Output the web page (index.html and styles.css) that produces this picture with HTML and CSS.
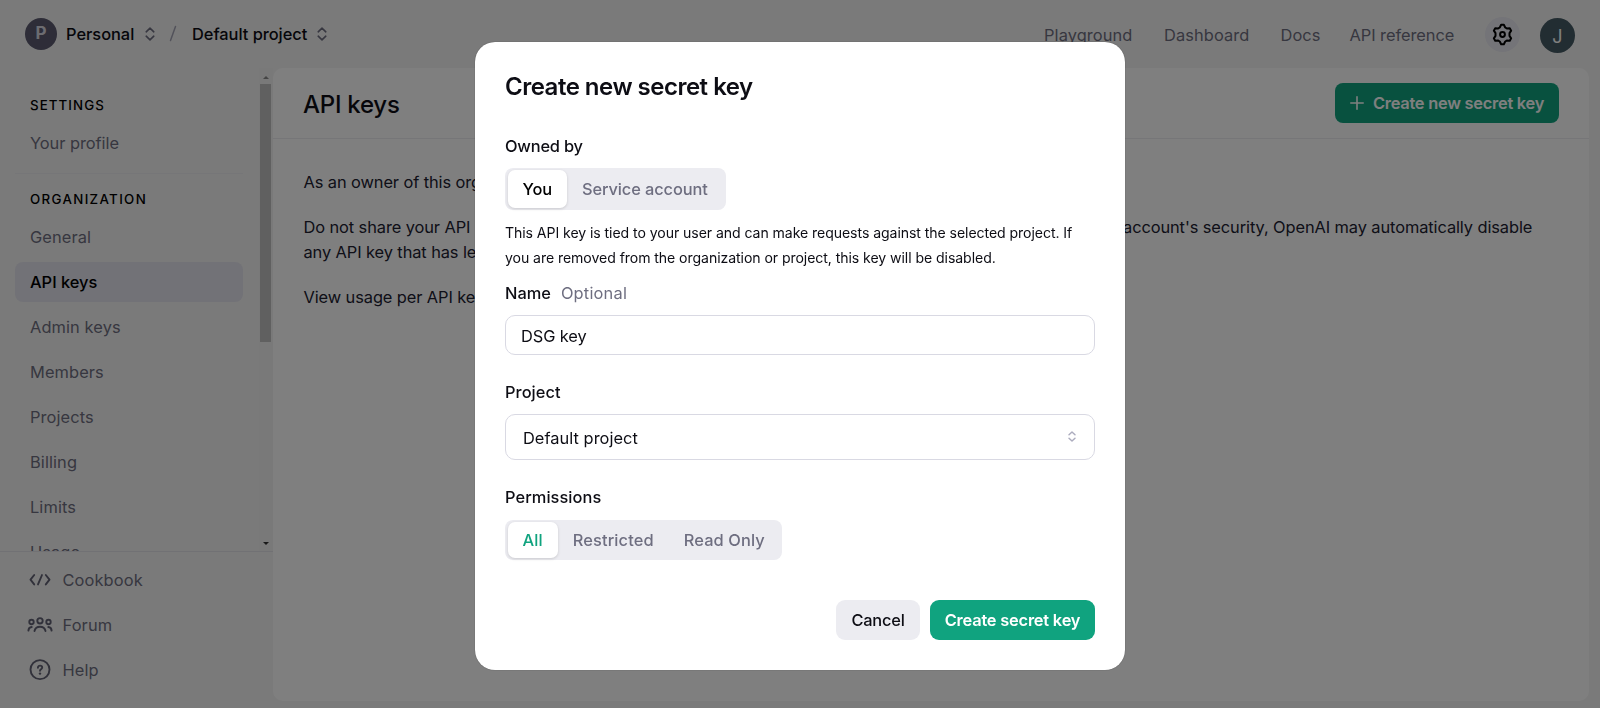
FILE: index.html
```html
<!DOCTYPE html>
<html lang="en">
<head>
<meta charset="utf-8">
<title>API keys</title>
<link rel="stylesheet" href="styles.css">
</head>
<body>
<div class="app">
  <header class="topbar">
    <div class="crumbs">
      <span class="org-avatar">P</span>
      <span class="crumb crumb-org">Personal</span>
      <svg class="updown" viewBox="0 0 10 14"><path d="M1.2 4.8 5 1.2l3.8 3.6M1.2 9.2 5 12.8l3.8-3.6"/></svg>
      <svg class="slash" viewBox="0 0 8 16"><path d="M6.500 1 1.500 15"/></svg>
      <span class="crumb crumb-project">Default project</span>
      <svg class="updown" viewBox="0 0 10 14"><path d="M1.2 4.8 5 1.2l3.8 3.6M1.2 9.2 5 12.8l3.8-3.6"/></svg>
    </div>
    <nav class="topnav">
      <a class="nav-play">Playground</a>
      <a class="nav-dash">Dashboard</a>
      <a class="nav-docs">Docs</a>
      <a class="nav-ref">API reference</a>
      <span class="gear"><svg viewBox="0 0 24 24"><path d="M10.700 2.700h2.600l1.300 2.600 1.500.9 2.900-.2 1.300 2.300-1.600 2.400v2.600l1.600 2.400-1.300 2.300-2.900-.2-1.500.9-1.300 2.600h-2.600l-1.300-2.600-1.500-.9-2.900.2-1.300-2.300 1.600-2.400v-2.600L3.700 8.300 5 6l2.900.2 1.500-.9z"/><circle cx="12" cy="12" r="2.300"/></svg></span>
      <span class="user-avatar">J</span>
    </nav>
  </header>
  <div class="columns">
    <aside class="sidebar">
      <div class="side-scroll">
        <div class="side-list">
          <h2 class="side-heading">SETTINGS</h2>
          <a class="side-item">Your profile</a>
          <hr class="side-rule">
          <h2 class="side-heading side-heading-org">ORGANIZATION</h2>
          <a class="side-item">General</a>
          <a class="side-item side-item-active">API keys</a>
          <a class="side-item">Admin keys</a>
          <a class="side-item">Members</a>
          <a class="side-item">Projects</a>
          <a class="side-item">Billing</a>
          <a class="side-item">Limits</a>
          <a class="side-item">Usage</a>
        </div>
        <div class="scrollbar">
          <span class="arrow-up"></span>
          <span class="thumb"></span>
          <span class="arrow-down"></span>
        </div>
      </div>
      <div class="side-footer">
        <a class="foot-item"><svg class="foot-icon" viewBox="0 0 26 26"><path d="M7.200 8 3.500 12.700l3.700 4.700M18.800 8l3.700 4.700-3.700 4.700M15 8l-4 9.400"/></svg>Cookbook</a>
        <a class="foot-item"><svg class="foot-icon" viewBox="0 0 26 26"><circle cx="13" cy="8.800" r="2.700"/><circle cx="4.500" cy="10" r="2.200"/><circle cx="21.500" cy="10" r="2.200"/><path d="M7.500 19c.7-3 2.900-4.200 5.500-4.200s4.800 1.200 5.500 4.200M1.400 18.600c.1-2 1-3.400 3.300-3.600M24.600 18.600c-.1-2-1-3.400-3.300-3.600"/></svg>Forum</a>
        <a class="foot-item"><svg class="foot-icon" viewBox="0 0 26 26"><circle cx="13" cy="12.600" r="9.500"/><path d="M10.900 10.700c0-2.900 4.300-2.700 4.300-.2 0 1.600-2.200 1.700-2.200 3.200"/><circle class="dot" cx="13" cy="16.600" r="1.200"/></svg>Help</a>
      </div>
    </aside>
    <main class="card">
      <div class="card-head">
        <h1 class="card-title">API keys</h1>
        <span class="create-new"><svg class="plus" viewBox="0 0 14 14"><path d="M7 .8v12.400M.8 7h12.400"/></svg>Create new secret key</span>
      </div>
      <div class="card-body">
        <p>As an owner of this organization, you can view and manage all API keys in this organization.</p>
        <p>Do not share your API key with others or expose it in the browser or other client-side code. To protect your account's security, OpenAI may automatically disable<br>any API key that has leaked publicly.</p>
        <p>View usage per API key on the Usage page.</p>
      </div>
    </main>
  </div>
</div>

<div class="overlay">
  <section class="modal">
    <h2 class="modal-title">Create new secret key</h2>
    <div class="label label-owner">Owned by</div>
    <div class="segments segments-owner">
      <span class="seg seg-on">You</span><span class="seg">Service account</span>
    </div>
    <p class="hint">This API key is tied to your user and can make requests against the selected project. If<br>you are removed from the organization or project, this key will be disabled.</p>
    <div class="label label-name">Name <span class="optional">Optional</span></div>
    <div class="field field-name">DSG key</div>
    <div class="label label-next">Project</div>
    <div class="field field-project">Default project<svg class="select-icon" viewBox="0 0 10 14"><path d="M1.200 4.800 5 1.200l3.800 3.600M1.200 9.200 5 12.800l3.800-3.600"/></svg></div>
    <div class="label label-next">Permissions</div>
    <div class="segments segments-perm">
      <span class="seg seg-on seg-green">All</span><span class="seg">Restricted</span><span class="seg">Read Only</span>
    </div>
    <div class="actions">
      <span class="btn btn-cancel">Cancel</span>
      <span class="btn btn-create">Create secret key</span>
    </div>
  </section>
</div>
</body>
</html>
```
FILE: styles.css
```css
* { box-sizing: border-box; }
body {
  margin: 0;
  height: 708px;
  overflow: hidden;
  background: #f5f5f5;
  color: #0d0d14;
  font: 400 16.4px/25px Inter, "Liberation Sans", sans-serif;
}
h1, h2, p { margin: 0; }
svg { display: block; flex: none; fill: none; stroke: currentColor; stroke-linecap: round; stroke-linejoin: round; }

.app { height: 708px; display: flex; flex-direction: column; }

/* Top bar */
.topbar { height: 68px; display: flex; justify-content: space-between; padding: 0 25px; }
.crumbs { display: flex; align-items: center; height: 67px; }
.org-avatar {
  width: 32px; height: 32px; border-radius: 50%;
  display: flex; align-items: center; justify-content: center;
  background: #5c5b70; color: #d9d9e3; font-weight: 700; font-size: 17px;
}
.crumb { font-weight: 500; padding-top: 1px; }
.crumb-org { width: 79px; padding-left: 9px; margin-right: 9px; letter-spacing: -0.02px; }
.crumb-project { width: 115px; margin: 0 10px 0 15px; letter-spacing: -0.03px; white-space: nowrap; }
.updown { width: 10px; height: 14px; stroke: #6e6e80; stroke-width: 1.6; }
.slash { width: 8px; height: 17px; margin-left: 14px; stroke: #a5a5b5; stroke-width: 1.5; }
.topnav { display: flex; align-items: center; height: 70px; color: #6e6e80; letter-spacing: 0.1px; }
.nav-play { width: 120px; }
.nav-dash { width: 116.5px; }
.nav-docs { width: 69px; }
.nav-ref { width: 135.5px; letter-spacing: -0.05px; }
.gear {
  width: 35px; height: 35px; border-radius: 50%; margin-bottom: 2px;
  display: flex; align-items: center; justify-content: center; background: #e8e8f0; color: #000;
}
.gear svg { width: 25px; height: 25px; stroke-width: 1.9; }
.user-avatar {
  width: 35px; height: 35px; border-radius: 50%; margin: 1px 0 0 20px;
  display: flex; align-items: center; justify-content: center;
  background: #455a64; color: #fff; font-size: 18px; padding-top: 1px;
}

/* Sidebar */
.columns { flex: 1; display: flex; min-height: 0; padding: 0 11px 7px 0; }
.sidebar { width: 273px; height: 640px; display: flex; flex-direction: column; }
.side-scroll { height: 483px; display: flex; overflow: hidden; }
.side-list { width: 259px; padding: 27px 16px 0 15px; }
.side-heading {
  font-size: 13.3px; font-weight: 500; line-height: 20px; letter-spacing: 1.1px;
  padding-left: 15px; margin-bottom: 8px; color: #000;
}
.side-heading-org { letter-spacing: 1.35px; margin-top: 15px; }
.side-rule { border: 0; height: 1px; background: #ececf1; margin: 10px 0 0; }
.side-item {
  display: flex; align-items: center; height: 40px; margin-bottom: 5px; padding: 1px 0 0 15px;
  border-radius: 8px; color: #6e6e80; letter-spacing: 0.1px;
}
.side-item:nth-of-type(1) { margin-bottom: 0; letter-spacing: -0.05px; }
.side-item-active { background: #e4e4ee; color: #000; font-weight: 500; letter-spacing: 0; }
.scrollbar {
  width: 14px; background: #f3f3f3; display: flex; flex-direction: column; align-items: center;
  padding: 8px 2px 6px 1px;
}
.arrow-up { border: 3px solid transparent; border-top: 0; border-bottom-color: #8a8a8a; }
.thumb { width: 11px; height: 258px; margin-top: 5px; background: #c1c1c1; }
.arrow-down { border: 3px solid transparent; border-bottom: 0; border-top-color: #333; margin-top: auto; }
.side-footer { border-top: 1px solid #e3e3e8; padding-top: 8px; flex: 1; }
.foot-item {
  display: flex; align-items: center; gap: 9.5px; height: 40px; margin-bottom: 5px; padding: 1px 0 0 27px;
  color: #6e6e80; letter-spacing: 0.12px;
}
.foot-icon { width: 26px; height: 26px; stroke-width: 1.9; color: #626275; margin-top: -1px; }
.dot { fill: currentColor; stroke: none; }

/* Main card */
.card { flex: 1; background: #fff; border-radius: 10px; height: 633px; }
.card-head {
  height: 71px; border-bottom: 1px solid #ececf1; padding: 0 30px;
  display: flex; align-items: center; justify-content: space-between;
}
.card-title { font-size: 24px; line-height: 30px; font-weight: 500; letter-spacing: -0.25px; padding-top: 3px; }
.create-new {
  width: 224px; height: 40px; border-radius: 8px; padding-left: 15px;
  display: flex; align-items: center; gap: 9px; background: #10a37f; color: #fff;
  font-weight: 600; letter-spacing: -0.25px; white-space: nowrap;
}
.plus { width: 14px; height: 14px; stroke-width: 1.6; }
.card-body { padding: 31px 30px 0 30.5px; color: #202030; letter-spacing: -0.09px; white-space: nowrap; }
.card-body p { margin-bottom: 20px; }

/* Modal */
.overlay {
  position: fixed; inset: 0; background: rgba(0, 0, 0, 0.5);
  display: flex; justify-content: center; align-items: flex-start; padding-top: 42px;
}
.modal {
  width: 650px; height: 628px; padding: 30px; border-radius: 20px; background: #fff;
  box-shadow: 0 0 1px rgba(0, 0, 0, 0.6);
}
.modal-title { font-size: 24px; line-height: 29px; font-weight: 600; letter-spacing: -0.5px; }
.label { font-weight: 500; }
.label-owner { margin-top: 33px; letter-spacing: -0.2px; }
.label-name { margin-top: 11px; display: flex; gap: 10px; letter-spacing: 0; }
.label-next { margin-top: 25px; letter-spacing: 0.06px; }
.optional { font-weight: 400; color: #6e6e80; letter-spacing: 0.2px; }
.segments {
  display: flex; width: max-content; padding: 2px 2.5px; border-radius: 8px;
  background: #ececf1; color: #6e6e80; font-weight: 500; letter-spacing: -0.1px;
}
.segments-owner { margin-top: 9px; height: 42px; width: 221px; }
.segments-perm { margin-top: 10px; height: 40px; width: 277px; letter-spacing: 0.12px; }
.seg { display: flex; align-items: center; padding: 1px 15px 0; white-space: nowrap; border-radius: 7px; }
.seg-on { background: #fff; color: #000; box-shadow: 0 1px 3px rgba(0, 0, 0, 0.15); }
.seg-green { color: #10a37f; }
.hint { margin-top: 10px; font-size: 14.1px; letter-spacing: -0.075px; white-space: nowrap; }
.field {
  margin-top: 9px; border: 1px solid #d9d9e3; border-radius: 10px;
  display: flex; align-items: center; justify-content: space-between; letter-spacing: 0.04px;
}
.field-name { height: 40px; padding: 2px 15px 0; letter-spacing: -0.1px; }
.field-project { height: 46px; padding: 2px 18px 0 17px; }
.select-icon { width: 8px; height: 11px; stroke: #acacbe; stroke-width: 1.8; margin-bottom: 4px; }
.actions { margin-top: 40px; display: flex; justify-content: flex-end; gap: 10px; }
.btn {
  height: 40px; border-radius: 9px; display: flex; align-items: center; justify-content: center;
  white-space: nowrap; letter-spacing: -0.2px; padding-top: 1px;
}
.btn-cancel { width: 84px; background: #ececf1; color: #0d0d14; font-weight: 500; }
.btn-create { width: 165px; background: #10a37f; color: #fff; font-weight: 600; }
```
